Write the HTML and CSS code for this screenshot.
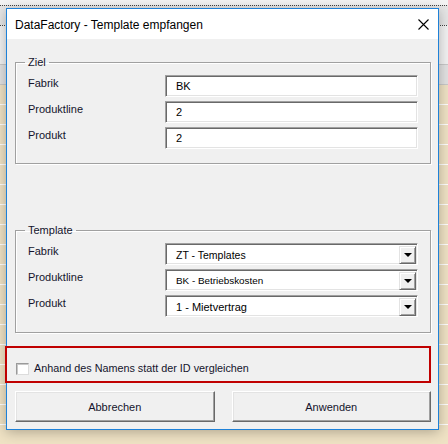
FILE: index.html
```html
<!DOCTYPE html>
<html lang="de">
<head>
<meta charset="utf-8">
<title>DataFactory - Template empfangen</title>
<link rel="stylesheet" href="styles.css">
</head>
<body>
<div class="window">
  <div class="titlebar">
    <span class="title">DataFactory - Template empfangen</span>
    <svg class="close" width="11" height="11" viewBox="0 0 11 11"><path d="M0.5 0.5L10.5 10.5M10.5 0.5L0.5 10.5" stroke="#000" stroke-width="1.1" fill="none"/></svg>
  </div>
  <div class="content">
    <fieldset class="group group-ziel">
      <legend>Ziel</legend>
      <div class="row"><span class="lbl">Fabrik</span><div class="field">BK</div></div>
      <div class="row"><span class="lbl">Produktline</span><div class="field">2</div></div>
      <div class="row"><span class="lbl">Produkt</span><div class="field">2</div></div>
    </fieldset>
    <fieldset class="group group-template">
      <legend>Template</legend>
      <div class="row"><span class="lbl">Fabrik</span><div class="combo"><span class="val">ZT - Templates</span><span class="drop"><span class="arrow"></span></span></div></div>
      <div class="row"><span class="lbl">Produktline</span><div class="combo"><span class="val val-small">BK - Betriebskosten</span><span class="drop"><span class="arrow"></span></span></div></div>
      <div class="row"><span class="lbl">Produkt</span><div class="combo"><span class="val val-large">1 - Mietvertrag</span><span class="drop"><span class="arrow"></span></span></div></div>
    </fieldset>
    <div class="checkrow">
      <span class="check"></span>
      <span class="checktext">Anhand des Namens statt der ID vergleichen</span>
    </div>
    <div class="buttons">
      <button class="btn">Abbrechen</button>
      <button class="btn">Anwenden</button>
    </div>
  </div>
</div>
</body>
</html>
```
FILE: styles.css
```css
html, body {
  margin: 0;
  padding: 0;
}
body {
  width: 448px;
  height: 444px;
  overflow: hidden;
  font-family: "Liberation Sans", Arial, sans-serif;
  background:
    repeating-linear-gradient(to right, #444 0 1px, transparent 1px 2px) 0 5px / 100% 1px no-repeat,
    repeating-linear-gradient(to right, #444 0 1px, transparent 1px 2px) 0 25px / 100% 1px no-repeat,
    repeating-linear-gradient(to bottom, #efe2c4 0 19px, #ffffff 19px 20px) 0 85px / 100% 400px no-repeat,
    linear-gradient(to bottom, #f4f4f4 0 5px, #e6e6e6 5px 25px, #f2f2f2 25px 64px, #c9c9c9 64px 65px, #e2e2e2 65px 84px, #c9c9c9 84px 85px, #efe2c4 85px);
  position: relative;
}
.window {
  position: absolute;
  left: 6px;
  top: 8px;
  width: 431px;
  border: 1px solid #1e81d8;
  background: #f0f0f0;
  box-shadow: 0 2px 12px rgba(0, 0, 0, 0.28);
}
.titlebar {
  height: 30px;
  background: #fff;
  display: flex;
  align-items: center;
  justify-content: space-between;
  padding: 0 9px 0 8px;
}
.title {
  font-size: 12px;
  color: #000;
  margin-top: 1px;
}
.close {
  display: block;
  margin-top: 1px;
}
.content {
  display: flex;
  flex-direction: column;
  padding: 17px 7px 7px 8px;
}
.group {
  margin: 0;
  padding: 6px 12px 14px 12px;
  border: 1px solid #a0a0a0;
  box-shadow: 1px 1px 0 #fff, inset 1px 1px 0 #fff;
  display: flex;
  flex-direction: column;
  gap: 4px;
  min-width: 0;
}
.group-template {
  margin-top: 60px;
  padding-bottom: 15px;
}
.group legend {
  font-size: 11px;
  line-height: 13px;
  color: #14142c;
  padding: 0 3px;
  margin-left: -3px;
}
.row {
  display: flex;
  height: 22px;
}
.lbl {
  width: 137px;
  flex: none;
  font-size: 11px;
  line-height: 13px;
  padding-top: 2px;
  color: #14142c;
}
.field, .combo {
  flex: 1;
  box-sizing: border-box;
  height: 22px;
  background: #fff;
  border-top: 1px solid #a0a0a0;
  border-left: 1px solid #a0a0a0;
  border-bottom: 1px solid #fff;
  border-right: 1px solid #fff;
  box-shadow: inset 1px 1px 0 #696969, inset -1px -1px 0 #e3e3e3;
}
.field {
  font-size: 11px;
  line-height: 20px;
  padding-left: 10px;
  color: #000;
}
.combo {
  display: flex;
  align-items: center;
  padding: 2px 1px 1px 2px;
}
.val {
  flex: 1;
  font-size: 10.5px;
  padding-left: 8px;
  color: #000;
}
.val-small {
  font-size: 9.9px;
}
.val-large {
  font-size: 11px;
}
.drop {
  width: 17px;
  height: 18px;
  box-sizing: border-box;
  background: #f0f0f0;
  border-top: 1px solid #e3e3e3;
  border-left: 1px solid #e3e3e3;
  border-right: 1px solid #696969;
  border-bottom: 1px solid #696969;
  box-shadow: inset 1px 1px 0 #fff, inset -1px -1px 0 #a0a0a0;
  display: flex;
  align-items: center;
  justify-content: center;
}
.arrow {
  width: 0;
  height: 0;
  border-left: 4px solid transparent;
  border-right: 4px solid transparent;
  border-top: 4px solid #000;
  margin-top: 1px;
}
.checkrow {
  margin: 13px 0 0 -10px;
  height: 37px;
  box-sizing: border-box;
  border: 2px solid #c00000;
  display: flex;
  align-items: flex-end;
  padding: 0 0 6px 9px;
  width: 426px;
}
.check {
  width: 13px;
  height: 12px;
  box-sizing: border-box;
  background: #fff;
  border-top: 1px solid #9a9a9a;
  border-left: 1px solid #9a9a9a;
  border-bottom: 1px solid #dcdcdc;
  border-right: 1px solid #dcdcdc;
  box-shadow: inset 1px 1px 0 #c8c8c8;
  flex: none;
}
.checktext {
  font-size: 10.8px;
  line-height: 13px;
  color: #14142c;
  margin-left: 5px;
}
.buttons {
  display: flex;
  gap: 17px;
  margin-top: 8px;
}
.btn {
  width: 200px;
  height: 31px;
  box-sizing: border-box;
  background: #f0f0f0;
  font-family: "Liberation Sans", Arial, sans-serif;
  font-size: 11px;
  color: #14142c;
  border-top: 1px solid #fff;
  border-left: 1px solid #fff;
  border-right: 1px solid #696969;
  border-bottom: 1px solid #696969;
  box-shadow: inset -1px -1px 0 #a0a0a0, inset 1px 1px 0 #e3e3e3;
  padding: 0;
}
```
